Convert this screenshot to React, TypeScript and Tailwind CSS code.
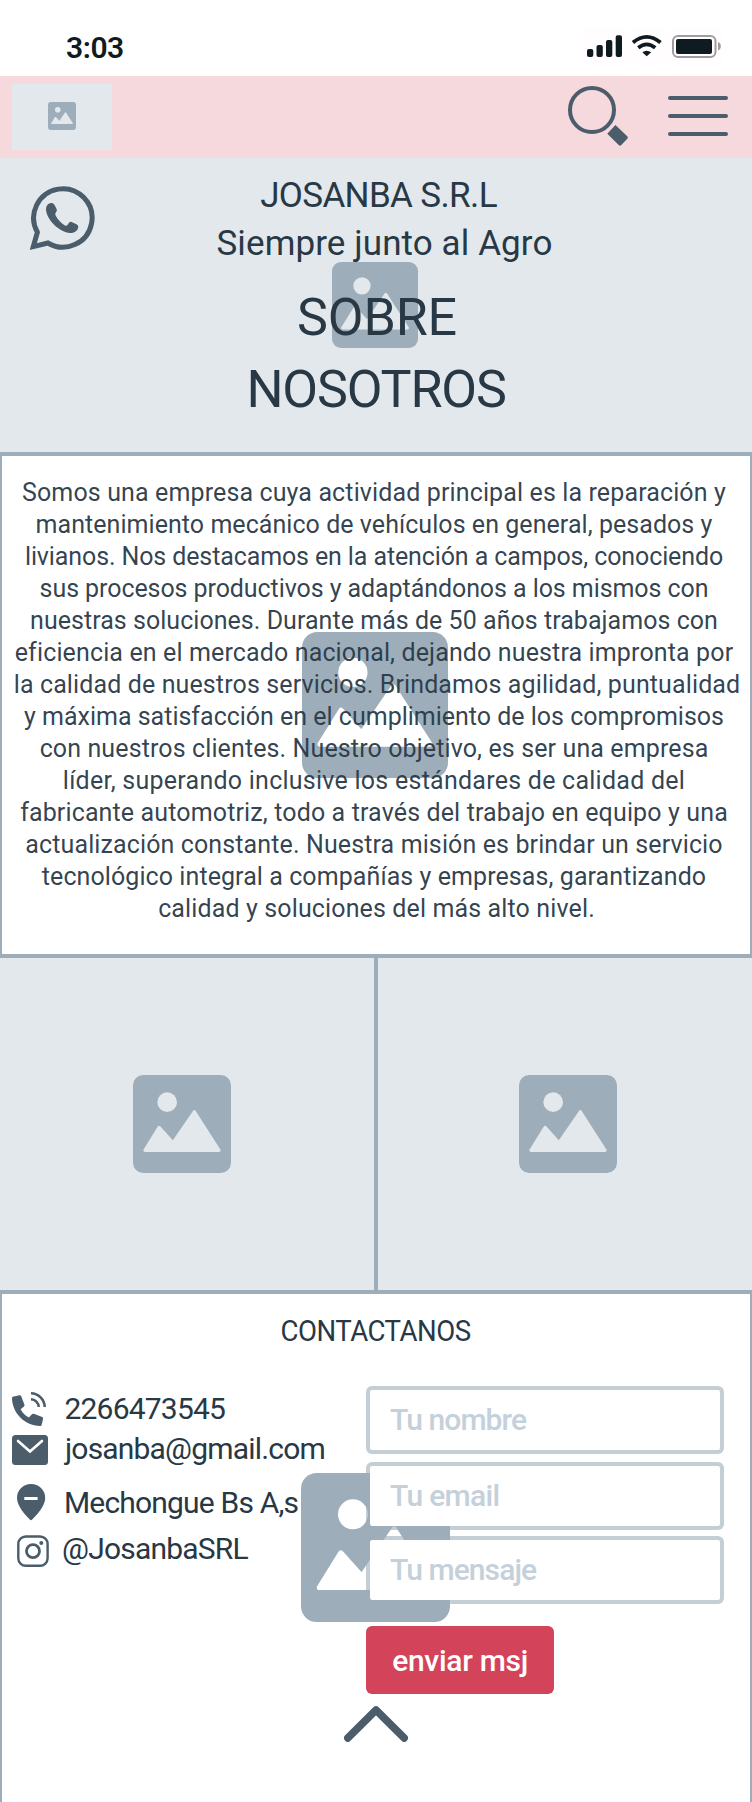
import React from "react";

const ABOUT: { text: string; className: string }[] = [
  { text: "Somos una empresa cuya actividad principal es la reparación y", className: "tracking-[0.125px]" },
  { text: "mantenimiento mecánico de vehículos en general, pesados y", className: "tracking-[0.052px]" },
  { text: "livianos. Nos destacamos en la atención a campos, conociendo", className: "tracking-[-0.115px]" },
  { text: "sus procesos productivos y adaptándonos a los mismos con", className: "tracking-[-0.076px]" },
  { text: "nuestras soluciones. Durante más de 50 años trabajamos con", className: "tracking-[0.037px]" },
  { text: "eficiencia en el mercado nacional, dejando nuestra impronta por", className: "tracking-[0.132px]" },
  { text: "la calidad de nuestros servicios. Brindamos agilidad, puntualidad", className: "pl-[6px] tracking-[0.12px]" },
  { text: "y máxima satisfacción en el cumplimiento de los compromisos", className: "tracking-[-0.007px]" },
  { text: "con nuestros clientes. Nuestro objetivo, es ser una empresa", className: "tracking-[0.117px]" },
  { text: "líder, superando inclusive los estándares de calidad del", className: "tracking-[0.253px]" },
  { text: "fabricante automotriz, todo a través del trabajo en equipo y una", className: "tracking-[0.133px]" },
  { text: "actualización constante. Nuestra misión es brindar un servicio", className: "tracking-[0.118px]" },
  { text: "tecnológico integral a compañías y empresas, garantizando", className: "tracking-[0.077px]" },
  { text: "calidad y soluciones del más alto nivel.", className: "pl-[5px] tracking-[0.129px]" },
];

function Picture({ className, cut = "#e3e8ec" }: { className: string; cut?: string }) {
  return (
    <svg viewBox="0 0 294 294" className={className} aria-hidden="true">
      <rect width="294" height="294" rx="31" fill="#9dadb9" />
      <circle cx="102.5" cy="81.500" r="29.500" fill={cut} />
      <path
        d="M36 226 78.500 157.500 120 203.500 184 110.500 258 226Z"
        fill={cut}
        stroke={cut}
        strokeWidth="10"
        strokeLinejoin="round"
      />
    </svg>
  );
}

function StatusBar() {
  return (
    <div className="flex h-[76px] items-start justify-between bg-white pl-[66px] pr-[30px]">
      <span className="pt-[30px] text-[30px] font-semibold leading-[36px] tracking-[-0.45px] text-[#101a21]">3:03</span>
      <div className="flex gap-[2px] pt-[27px]">
        <svg viewBox="584 27 41 39" className="h-[39px] w-[41px] bg-[#fffdfe]" fill="#101a21">
          <rect x="587" y="49" width="6.300" height="8" rx="2" />
          <rect x="596.500" y="45" width="6.300" height="12" rx="2" />
          <rect x="606" y="40" width="6.300" height="17" rx="2" />
          <rect x="615.700" y="35.300" width="6.300" height="21.700" rx="2" />
        </svg>
        <svg viewBox="627 27 39 39" className="h-[39px] w-[39px] bg-[#fffdfe]" fill="none" stroke="#101a21">
          <path d="M633 42.500Q646.700 31.300 660.500 42.500" strokeWidth="3.800" />
          <path d="M638.300 47.800Q646.700 41 655.200 47.800" strokeWidth="3.800" />
          <path d="M642.300 52.300Q646.700 49 651.200 52.300L646.700 56.300Z" fill="#101a21" stroke="none" />
        </svg>
        <svg viewBox="668 27 54 39" className="h-[39px] w-[54px] bg-[#fffdfe]">
          <rect x="673" y="36" width="42.500" height="21" rx="5" fill="white" stroke="#a19c9f" strokeWidth="2" />
          <rect x="676" y="39" width="36" height="15" rx="2" fill="#101a21" />
          <path d="M718 42Q720.800 43 720.800 46.200T718 50.500Z" fill="#a19c9f" />
        </svg>
      </div>
    </div>
  );
}

function Header() {
  return (
    <header className="flex h-[82px] items-start bg-[#f6d9dd] pl-3 pr-6">
      <div className="mt-2 flex h-[66px] w-[100px] items-center justify-center bg-[#e3e8ec] pb-[2px]">
        <Picture className="h-7 w-7" />
      </div>
      <button className="ml-auto mt-[9px] h-[62px] w-[62px]" aria-label="Buscar">
        <svg viewBox="567 85 62 62" className="h-[62px] w-[62px]">
          <circle cx="592" cy="110" r="22" fill="none" stroke="#4b5d6b" strokeWidth="4" />
          <path
            d="M615.400 125 627.300 136.200Q628.500 137.500 627.300 138.700L621.300 145Q620 146.300 618.700 145L607.300 133.700Z"
            fill="#4b5d6b"
          />
        </svg>
      </button>
      <button className="ml-[39px] mt-[20px] flex w-[60px] flex-col gap-[14px]" aria-label="Abrir">
        <span className="h-1 w-full rounded-full bg-[#4b5d6b]" />
        <span className="h-1 w-full rounded-full bg-[#4b5d6b]" />
        <span className="h-1 w-full rounded-full bg-[#4b5d6b]" />
      </button>
    </header>
  );
}

function Hero() {
  return (
    <section className="relative h-[294px] bg-[#e3e8ec] pt-[14px] text-center text-[#283845]">
      <Picture className="absolute left-[332px] top-[104px] h-[86px] w-[86px]" />
      <svg viewBox="28 184 68 68" className="absolute left-[28px] top-[26px] h-[68px] w-[68px]">
        <path
          d="M37.400 232.200A29.200 29.200 0 1 1 47.900 243L33.300 246.600Z"
          fill="none"
          stroke="#4b5d6b"
          strokeWidth="5"
          strokeMiterlimit="8"
        />
        <path
          d="M46 209.500C46 205 49 203 51.500 203Q53.500 203 54.700 205.300L56.600 209Q57.400 210.700 56 212.200Q54.700 213.500 55.500 215.300C57.500 219.500 61 223 65 225.500Q66.500 226.300 67.600 224.800L69.200 222.600Q70.200 221.500 71.600 222L76.500 224.200Q78.500 225.200 78.300 227C77.800 231 74 233 70 233C60 232.500 46.500 220 46 209.500Z"
          fill="#4b5d6b"
        />
      </svg>
      <div className="relative">
        <p className="pl-[5px] text-[35px] leading-[48px] tracking-[-0.633px]">JOSANBA S.R.L</p>
        <p className="pl-[17px] text-[35px] leading-[48px] tracking-[0.102px]">Siempre junto al Agro</p>
        <h1 className="pt-[14px] text-[52px] font-normal leading-[72px]">
          <span className="block pl-[2px] tracking-[-0.148px]">SOBRE</span>
          <span className="block tracking-[-1.169px]">NOSOTROS</span>
        </h1>
      </div>
    </section>
  );
}

function About() {
  return (
    <section className="relative h-[506px] border-x-2 border-y-4 border-[#9dadb9] bg-white pt-[21px]">
      <Picture cut="#ffffff" className="absolute left-[300px] top-[176px] h-[146px] w-[146px]" />
      <p className="relative pr-[4px] text-center text-[25px] leading-[32px] text-[#283845]/95">
        {ABOUT.map((line) => (
          <span key={line.text} className={`block whitespace-nowrap ${line.className}`}>
            {line.text}{" "}
          </span>
        ))}
      </p>
    </section>
  );
}

function Gallery() {
  return (
    <section className="flex h-[336px] border-b-4 border-[#9dadb9] bg-[#e3e8ec]">
      <div className="flex w-[378px] items-center justify-center border-r-4 border-[#9dadb9] pr-[10px]">
        <Picture className="h-[98px] w-[98px]" />
      </div>
      <div className="flex flex-1 items-center justify-center pl-[6px]">
        <Picture className="h-[98px] w-[98px]" />
      </div>
    </section>
  );
}

function ContactList() {
  return (
    <ul className="w-[364px] pt-[4px] text-[30px] leading-[36px] text-[#283845]">
      <li className="flex">
        <svg viewBox="2 1390 62.500 36" className="h-[36px] w-[62.5px] overflow-visible">
          <path
            d="M12.800 1396.700 19.300 1395.200Q20.600 1395 21.100 1396.100L24.400 1404.500Q24.800 1405.600 24 1406.400L20.600 1409.300Q23.500 1414.800 28.900 1417.600L31.900 1414.200Q32.700 1413.400 33.800 1413.800L42.200 1417Q43.300 1417.500 43.100 1418.700L41.600 1425Q41.300 1426 40.200 1426C24 1425.500 12.300 1412.500 12 1397.900Q12 1396.900 12.800 1396.700Z"
            fill="#4b5d6b"
          />
          <path
            d="M31 1393.300A14 14 0 0 1 44.700 1407M31 1399.300A8 8 0 0 1 38.700 1407"
            fill="none"
            stroke="#4b5d6b"
            strokeWidth="2.600"
          />
        </svg>
        <span className="pt-px tracking-[-0.805px]">2266473545</span>
      </li>
      <li className="mt-[4px] flex">
        <svg viewBox="2 1431 63 36" className="h-[36px] w-[63px]">
          <rect x="12" y="1435" width="36" height="30" rx="3.500" fill="#4b5d6b" />
          <path
            d="M18 1441 30 1451.500 42 1441"
            fill="none"
            stroke="white"
            strokeWidth="2.600"
            strokeLinecap="round"
          />
        </svg>
        <span className="tracking-[-0.815px]">josanba@gmail.com</span>
      </li>
      <li className="mt-[17px] flex">
        <svg viewBox="2 1484 62 36" className="h-[36px] w-[62px] overflow-visible">
          <path
            d="M31 1484A14 14 0 0 1 45.200 1498C45.200 1506 37 1514.500 32.200 1519.600Q31 1520.800 29.800 1519.600C25 1514.500 17 1506 17 1498A14 14 0 0 1 31 1484Z"
            fill="#4b5d6b"
          />
          <rect x="24.300" y="1497" width="13.300" height="3" fill="white" />
        </svg>
        <span className="pt-px tracking-[-0.822px]">Mechongue Bs A,s</span>
      </li>
      <li className="mt-[10px] flex">
        <svg viewBox="2 1531 60 36" className="h-[36px] w-[60px]" fill="none" stroke="#4b5d6b">
          <rect x="18.300" y="1536.500" width="29.300" height="29.300" rx="7.500" strokeWidth="2.400" />
          <circle cx="33" cy="1551.200" r="6.500" strokeWidth="2.800" />
          <circle cx="41.300" cy="1543" r="2" fill="#4b5d6b" stroke="none" />
        </svg>
        <span className="tracking-[-0.8px]">@JosanbaSRL</span>
      </li>
    </ul>
  );
}

const FIELD =
  "block h-[68px] w-[358px] rounded-[6px] border-4 border-[#9dadb9]/60 bg-white bg-clip-padding pb-[2px] pl-[20px] text-[30px] font-medium leading-[36px] outline-none placeholder:text-[#c4d0da] placeholder:opacity-100";

function ContactForm() {
  return (
    <form className="w-[358px]">
      <input className={`${FIELD} tracking-[-0.904px]`} placeholder="Tu nombre" />
      <input className={`${FIELD} mt-2 tracking-[-0.673px]`} placeholder="Tu email" />
      <input className={`${FIELD} mt-[6px] tracking-[-0.915px]`} placeholder="Tu mensaje" />
      <button
        type="button"
        className="mt-[22px] block h-[68px] w-[188px] rounded-[6px] bg-[#d3445a] pt-[2px] text-[30px] font-medium leading-[36px] tracking-[-0.289px] text-white"
      >
        enviar msj
      </button>
    </form>
  );
}

function Contact() {
  return (
    <section className="relative h-[508px] border-x-2 border-[#9dadb9] bg-white pt-[19px]">
      <Picture cut="#ffffff" className="absolute left-[299px] top-[179px] h-[149px] w-[149px]" />
      <div className="relative">
        <h2 className="scale-x-[0.92] pr-[1px] text-center text-[30px] font-normal leading-[36px] tracking-[-0.54px] text-[#283845]">
          CONTACTANOS
        </h2>
        <div className="mt-[37px] flex">
          <ContactList />
          <ContactForm />
        </div>
        <svg viewBox="344 1706 64 36" className="ml-[342px] mt-[12px] block h-[36px] w-[64px]">
          <path
            d="M347.800 1738 376 1710 404.200 1738"
            fill="none"
            stroke="#4b5d6b"
            strokeWidth="7.600"
            strokeLinecap="round"
            strokeLinejoin="round"
          />
        </svg>
      </div>
    </section>
  );
}

export default function App() {
  return (
    <main className="h-[1802px] w-[752px] overflow-hidden bg-white font-['Roboto',sans-serif]">
      <StatusBar />
      <Header />
      <Hero />
      <About />
      <Gallery />
      <Contact />
    </main>
  );
}
